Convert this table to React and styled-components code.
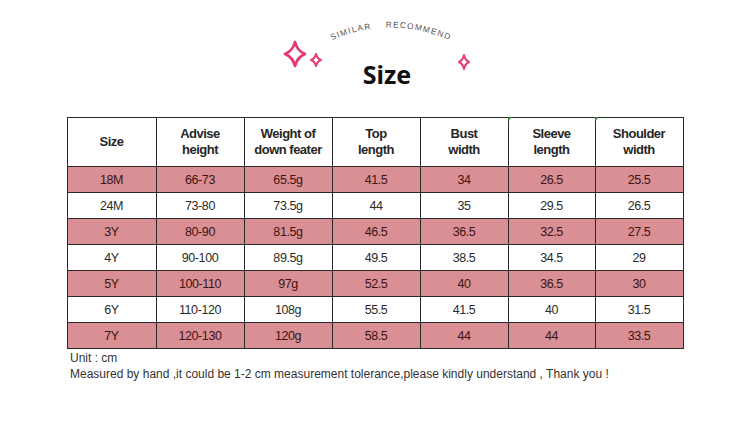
import React from 'react';
import styled, { createGlobalStyle } from 'styled-components';

const GlobalStyle = createGlobalStyle`
  body {
    margin: 0;
    background: #fff;
    font-family: "Liberation Sans", Arial, sans-serif;
  }
`;

const Page = styled.div`
  width: 750px;
  height: 446px;
  display: flex;
  flex-direction: column;
`;

const Header = styled.header`
  display: grid;
  height: 117px;
`;

const Decoration = styled.svg`
  grid-area: 1 / 1;
  width: 750px;
  height: 117px;
`;

const Title = styled.h1`
  grid-area: 1 / 1;
  align-self: start;
  justify-self: center;
  margin: 57px 0 0 24px;
  font-family: "Noto Sans", sans-serif;
  font-size: 25px;
  font-weight: 700;
  line-height: 34px;
  color: #111;
`;

const Table = styled.table`
  width: 616px;
  margin: 0 auto;
  border-collapse: collapse;
  table-layout: fixed;
  border: 1px solid #2a2a2a;
`;

const HeadCell = styled.th`
  height: 48px;
  padding: 0;
  border: 1px solid #2a2a2a;
  font-size: 13px;
  letter-spacing: -0.5px;
  font-weight: 700;
  line-height: 16px;
  color: #262626;
  text-align: center;
  background: #fff;
  position: relative;

  &::before {
    content: "";
    display: ${(p) => (p.$mark ? 'block' : 'none')};
    position: absolute;
    top: -1px;
    left: -1px;
    border-top: 4px solid #2f7d32;
    border-right: 4px solid transparent;
  }
`;

const Row = styled.tr`
  background: ${(p) => (p.$pink ? '#d98f93' : '#fff')};
  color: ${(p) => (p.$pink ? '#3d1416' : '#2b2b2b')};
`;

const Cell = styled.td`
  height: 25px;
  padding: 0;
  border: 1px solid #2a2a2a;
  font-size: 12.5px;
  letter-spacing: -0.4px;
  text-align: center;
`;

const Notes = styled.div`
  padding: 1px 0 0 70px;
  font-size: 12px;
  line-height: 16px;
  color: #333;
`;

const Sparkle = ({ cx, cy, w, h, sw }) => {
  const k = 0.24;
  const d = `M${cx} ${cy - h} Q${cx + w * k} ${cy - h * k} ${cx + w} ${cy} Q${cx + w * k} ${cy + h * k} ${cx} ${cy + h} Q${cx - w * k} ${cy + h * k} ${cx - w} ${cy} Q${cx - w * k} ${cy - h * k} ${cx} ${cy - h} Z`;
  return <path d={d} fill="none" stroke="#e6396f" strokeWidth={sw} strokeLinejoin="round" />;
};

const columns = [
  ['Size'],
  ['Advise', 'height'],
  ['Weight of', 'down feater'],
  ['Top', 'length'],
  ['Bust', 'width'],
  ['Sleeve', 'length'],
  ['Shoulder', 'width'],
];

const widths = [89, 88, 88, 88, 88, 87, 88];

const rows = [
  ['18M', '66-73', '65.5g', '41.5', '34', '26.5', '25.5'],
  ['24M', '73-80', '73.5g', '44', '35', '29.5', '26.5'],
  ['3Y', '80-90', '81.5g', '46.5', '36.5', '32.5', '27.5'],
  ['4Y', '90-100', '89.5g', '49.5', '38.5', '34.5', '29'],
  ['5Y', '100-110', '97g', '52.5', '40', '36.5', '30'],
  ['6Y', '110-120', '108g', '55.5', '41.5', '40', '31.5'],
  ['7Y', '120-130', '120g', '58.5', '44', '44', '33.5'],
];

function App() {
  return (
    <Page>
      <GlobalStyle />
      <Header>
        <Decoration viewBox="0 0 750 117">
          <defs>
            <path id="arc" d="M326 43 Q390 12 456 43" />
          </defs>
          <text fontSize="8.3" fill="#555" letterSpacing="1.2" fontFamily="Liberation Sans, sans-serif" style={{ whiteSpace: 'pre' }}>
            <textPath href="#arc" startOffset="50%" textAnchor="middle">
              SIMILAR    RECOMMEND
            </textPath>
          </text>
          <Sparkle cx={295} cy={54} w={10} h={12} sw={2.8} />
          <Sparkle cx={316} cy={60} w={5} h={6} sw={2} />
          <Sparkle cx={464} cy={62} w={5} h={7} sw={2} />
        </Decoration>
        <Title>Size</Title>
      </Header>

      <Table>
        <colgroup>
          {widths.map((w, i) => (
            <col key={i} style={{ width: w }} />
          ))}
        </colgroup>
        <thead>
          <tr>
            {columns.map((lines, i) => (
              <HeadCell key={i} $mark={i === 5 || i === 6}>
                {lines.map((l, j) => (
                  <div key={j}>{l}</div>
                ))}
              </HeadCell>
            ))}
          </tr>
        </thead>
        <tbody>
          {rows.map((r, i) => (
            <Row key={r[0]} $pink={i % 2 === 0}>
              {r.map((v, j) => (
                <Cell key={j}>{v}</Cell>
              ))}
            </Row>
          ))}
        </tbody>
      </Table>

      <Notes>
        <div>Unit : cm</div>
        <div>Measured by hand ,it could be 1-2 cm measurement tolerance,please kindly understand , Thank you !</div>
      </Notes>
    </Page>
  );
}

export default App;
